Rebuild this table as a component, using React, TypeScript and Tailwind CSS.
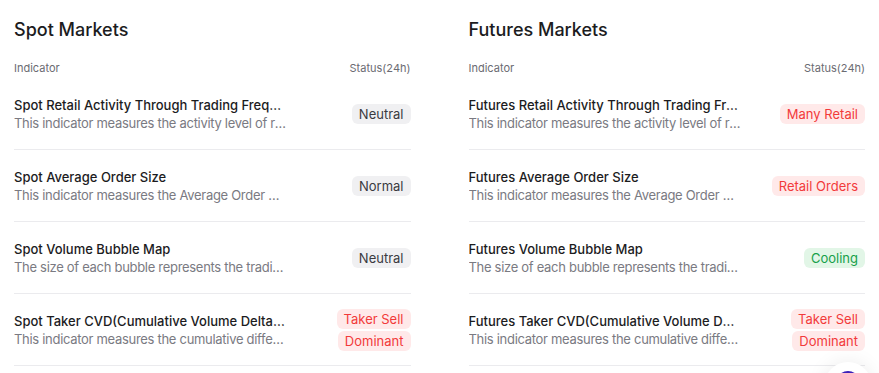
type Tone = "gray" | "red" | "green";

type Row = {
  title: string;
  desc: string;
  status: string[];
  tone: Tone;
};

const spot: Row[] = [
  {
    title: "Spot Retail Activity Through Trading Frequency",
    desc: "This indicator measures the activity level of retail traders",
    status: ["Neutral"],
    tone: "gray",
  },
  {
    title: "Spot Average Order Size",
    desc: "This indicator measures the Average Order Size of the market",
    status: ["Normal"],
    tone: "gray",
  },
  {
    title: "Spot Volume Bubble Map",
    desc: "The size of each bubble represents the trading volume",
    status: ["Neutral"],
    tone: "gray",
  },
  {
    title: "Spot Taker CVD(Cumulative Volume Delta, 90-day)",
    desc: "This indicator measures the cumulative difference between",
    status: ["Taker Sell", "Dominant"],
    tone: "red",
  },
];

const futures: Row[] = [
  {
    title: "Futures Retail Activity Through Trading Frequency",
    desc: "This indicator measures the activity level of retail traders",
    status: ["Many Retail"],
    tone: "red",
  },
  {
    title: "Futures Average Order Size",
    desc: "This indicator measures the Average Order Size of the market",
    status: ["Retail Orders"],
    tone: "red",
  },
  {
    title: "Futures Volume Bubble Map",
    desc: "The size of each bubble represents the trading volume",
    status: ["Cooling"],
    tone: "green",
  },
  {
    title: "Futures Taker CVD(Cumulative Volume Delta, 90-day)",
    desc: "This indicator measures the cumulative difference between",
    status: ["Taker Sell", "Dominant"],
    tone: "red",
  },
];

const toneClass: Record<Tone, string> = {
  gray: "bg-[#f0f0f2] text-[#3a3a3f]",
  red: "bg-[#ffe9e9] text-[#f23a3a]",
  green: "bg-[#e2f6e7] text-[#16a04a]",
};

function Market({ title, rows }: { title: string; rows: Row[] }) {
  return (
    <section className="flex-1">
      <h2 className="pt-[19px] text-[18px] leading-[22px] font-medium text-[#1c1c1e]">{title}</h2>
      <div className="mt-[20px] mb-[3px] flex justify-between text-[11px] leading-[14px] text-[#6b6b72]">
        <span>Indicator</span>
        <span>Status(24h)</span>
      </div>
      <div>
        {rows.map((r) => (
          <div
            key={r.title}
            className="flex items-center justify-between h-[72px] border-b border-[#ebebee]"
          >
            <div className="w-[272px] text-[13px] leading-[18px]">
              <div className="truncate text-[#1c1c1e] font-medium">{r.title}</div>
              <div className="truncate text-[#7a7a82] tracking-[-0.3px]">{r.desc}</div>
            </div>
            <div className="flex flex-col items-end gap-[2px]">
              {r.status.map((s) => (
                <span
                  key={s}
                  className={`rounded-[6px] px-[7px] text-[13px] leading-[20px] ${toneClass[r.tone]}`}
                >
                  {s}
                </span>
              ))}
            </div>
          </div>
        ))}
      </div>
    </section>
  );
}

export default function App() {
  return (
    <div className="relative h-[373px] overflow-hidden bg-white font-['Inter',sans-serif]">
      <div className="flex gap-[58px] px-[14px]">
        <Market title="Spot Markets" rows={spot} />
        <Market title="Futures Markets" rows={futures} />
      </div>
      <div className="absolute left-[824px] top-[362px] flex h-12 w-12 justify-center rounded-full bg-white pt-[9px] shadow-[0_0_20px_rgba(0,0,0,0.08)]">
        <div className="h-6 w-6 rounded-full bg-[#3b1fb8]" />
      </div>
    </div>
  );
}
